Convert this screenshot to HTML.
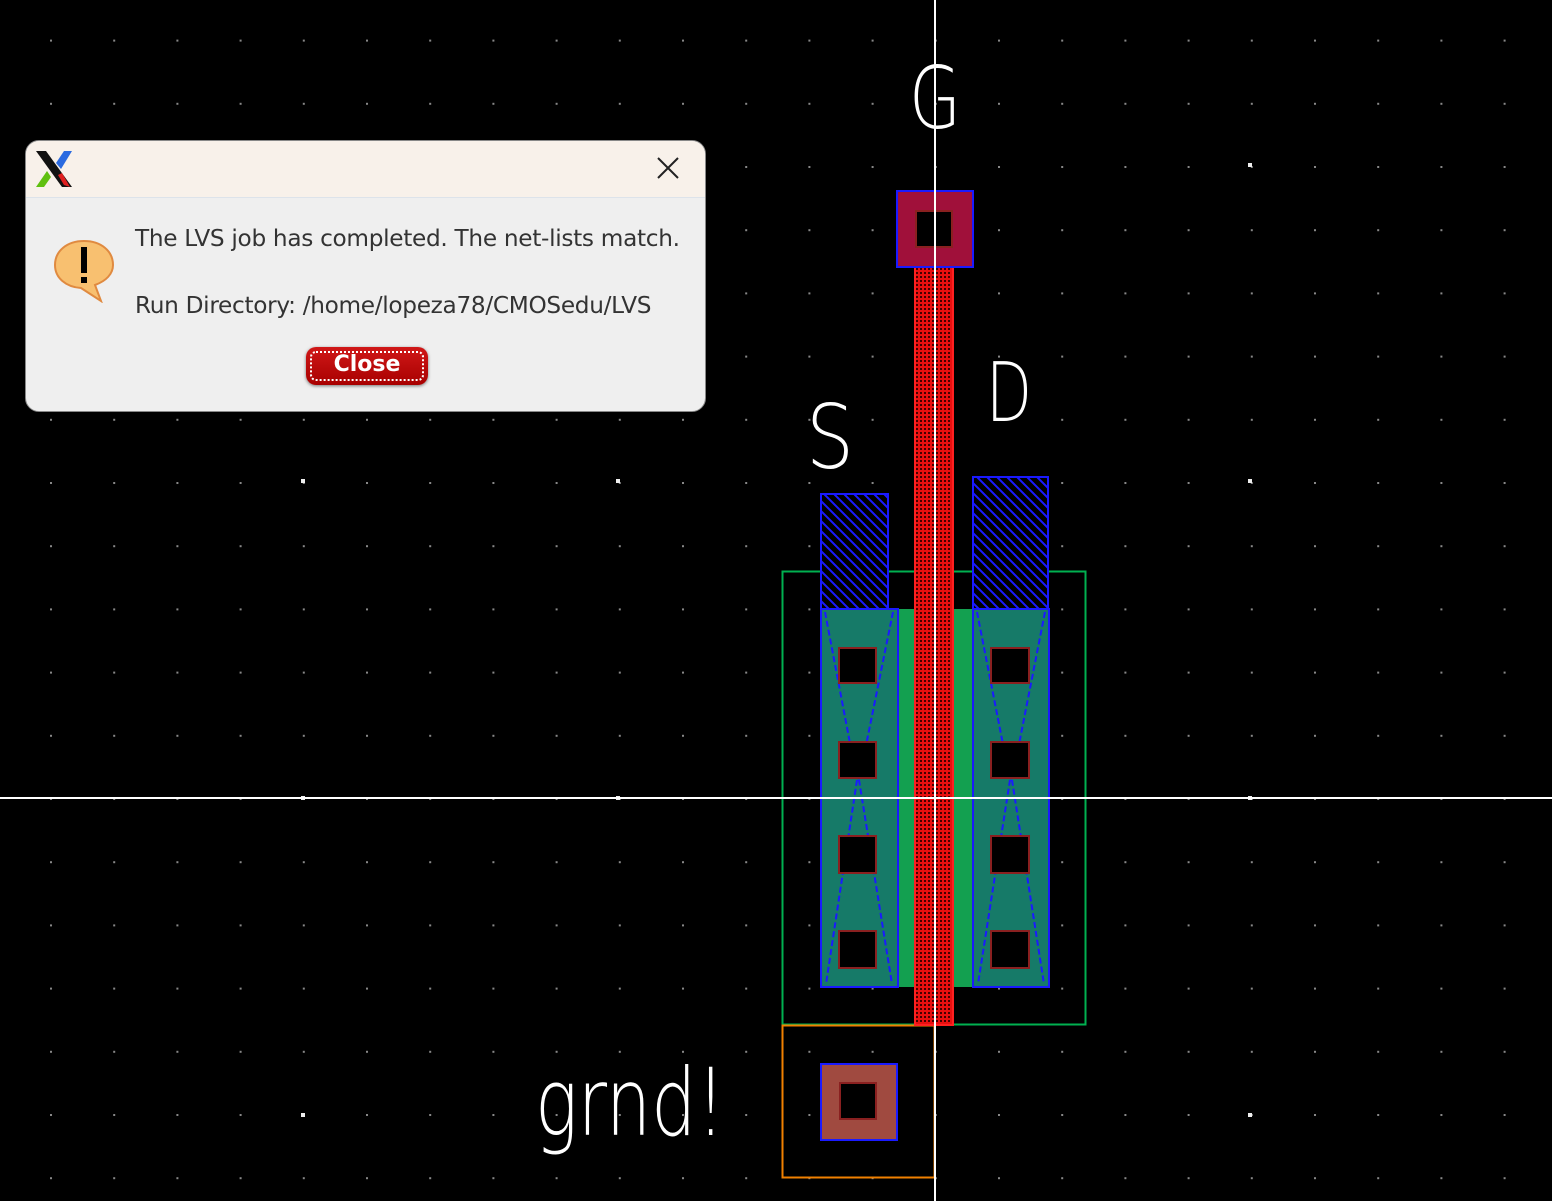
<!DOCTYPE html>
<html><head><meta charset="utf-8"><style>
html,body{margin:0;padding:0;background:#000;width:1552px;height:1201px;overflow:hidden}
svg{position:absolute;left:0;top:0}
.dlg{position:absolute;left:25px;top:140px;width:679px;height:270px;border:1px solid #888;border-radius:14px;background:#efefef;overflow:hidden;font-family:"DejaVu Sans","Liberation Sans",sans-serif}
.tb{height:56px;background:#f8f1ea;border-bottom:1px solid #dde3ea;position:relative}
.msg{position:absolute;left:109px;font-size:23.2px;color:#333;letter-spacing:-0.3px;white-space:nowrap}
.btn{position:absolute;left:280px;top:206px;width:122px;height:38px;border-radius:10px;background:linear-gradient(#d01818,#a80000);box-shadow:0 1px 3px rgba(0,0,0,.5)}
.btn i{position:absolute;left:4px;top:4px;right:4px;bottom:4px;border:2px dotted #fff;border-radius:6px}
.btn span{position:absolute;left:0;right:0;top:5px;text-align:center;color:#fff;font-weight:bold;font-size:22px}
</style></head><body>
<svg width="1552" height="1201" viewBox="0 0 1552 1201">
<defs>
<pattern id="g" x="50" y="39.6" width="63.2" height="63.2" patternUnits="userSpaceOnUse"><rect x="0" y="0" width="2" height="2" fill="#888"/></pattern>
<pattern id="bh" width="10" height="10" patternUnits="userSpaceOnUse"><path d="M-2 8L2 12M0 0L10 10M8 -2L12 2" stroke="#1a1aff" stroke-width="2"/></pattern>
<pattern id="rp" width="4" height="4" patternUnits="userSpaceOnUse"><rect width="4" height="4" fill="#e81010"/><rect width="2" height="2" fill="#400"/></pattern>
</defs>
<rect width="1552" height="1201" fill="#000"/>
<rect width="1552" height="1201" fill="url(#g)"/>
<g fill="#eee">
<rect x="301" y="479" width="4" height="4"/><rect x="616" y="479" width="4" height="4"/><rect x="1248" y="479" width="4" height="4"/>
<rect x="1248" y="163" width="4" height="4"/><rect x="301" y="1113" width="4" height="4"/><rect x="1248" y="1113" width="4" height="4"/>
<rect x="301" y="796" width="4" height="4"/><rect x="616" y="796" width="4" height="4"/><rect x="1248" y="796" width="4" height="4"/>
</g>
<rect x="782.5" y="571.5" width="303" height="453" fill="none" stroke="#00b050" stroke-width="2"/>
<rect x="782.5" y="1025.5" width="152" height="152" fill="none" stroke="#f08000" stroke-width="2"/>
<rect x="821" y="609" width="77" height="378" fill="#167a68"/>
<rect x="973" y="609" width="76" height="378" fill="#167a68"/>
<rect x="898" y="609" width="75" height="378" fill="#13a050"/>
<rect x="821" y="609" width="77" height="378" fill="none" stroke="#1a1aff" stroke-width="2"/>
<rect x="973" y="609" width="76" height="378" fill="none" stroke="#1a1aff" stroke-width="2"/>
<path d="M825 612L857 780L826 984M893 612L859 780L892 984M977 612L1010 780L978 984M1045 612L1012 780L1044 984" stroke="#1a1aff" stroke-width="2" stroke-dasharray="6 3" fill="none"/>
<rect x="821" y="494" width="67" height="115" fill="#000"/><rect x="821" y="494" width="67" height="115" fill="url(#bh)" stroke="#1a1aff" stroke-width="2"/>
<rect x="973" y="477" width="75" height="132" fill="#000"/><rect x="973" y="477" width="75" height="132" fill="url(#bh)" stroke="#1a1aff" stroke-width="2"/>
<g fill="#000" stroke="#8a2020" stroke-width="2">
<rect x="839" y="648" width="37" height="35"/><rect x="839" y="742" width="37" height="36"/><rect x="839" y="836" width="37" height="37"/><rect x="839" y="931" width="37" height="37"/>
<rect x="991" y="648" width="38" height="35"/><rect x="991" y="742" width="38" height="36"/><rect x="991" y="836" width="38" height="37"/><rect x="991" y="931" width="38" height="37"/>
</g>
<rect x="915" y="264" width="38" height="761" fill="url(#rp)" stroke="#ff2020" stroke-width="2"/>
<rect x="897" y="191" width="76" height="76" fill="#a0103a" stroke="#1a1aff" stroke-width="2"/>
<rect x="916" y="211" width="36" height="36" fill="#000" stroke="#8a2020" stroke-width="2"/>
<rect x="821" y="1064" width="76" height="76" fill="#a04a40" stroke="#1a1aff" stroke-width="2"/>
<rect x="840" y="1083" width="36" height="36" fill="#000" stroke="#8a2020" stroke-width="2"/>
<rect x="934" y="0" width="2" height="1201" fill="#fff"/>
<rect x="0" y="797" width="1552" height="2" fill="#fff"/>
<g fill="#fff" font-family="DejaVu Sans, sans-serif" font-weight="200">
<text x="909" y="128" font-size="86" textLength="52" lengthAdjust="spacingAndGlyphs">G</text>
<text x="986" y="421" font-size="82" textLength="46" lengthAdjust="spacingAndGlyphs">D</text>
<text x="806" y="468" font-size="88" textLength="48" lengthAdjust="spacingAndGlyphs">S</text>
<text x="535" y="1135" font-size="94" textLength="190" lengthAdjust="spacingAndGlyphs">grnd!</text>
</g>
</svg>
<div class="dlg">
<div class="tb">
<svg width="40" height="40" style="left:8px;top:8px" viewBox="0 0 40 40"><path d="M2 2L12 2L38 38L28 38Z" fill="#111"/><path d="M38 2L30 2L22 14L27 20Z" fill="#2a6ae0"/><path d="M2 38L10 38L17 28L13 22Z" fill="#60c010"/><path d="M24 26L30 36L36 38L28 24Z" fill="#e02020"/></svg>
<svg width="24" height="24" style="left:630px;top:15px" viewBox="0 0 24 24"><path d="M2 2L22 22M22 2L2 22" stroke="#222" stroke-width="2"/></svg>
</div>
<svg width="66" height="66" style="left:25px;top:96px" viewBox="0 0 66 66"><path d="M33 4C16 4 4 14 4 28C4 41 15 50 30 51L50 64L44 48C55 44 62 37 62 28C62 14 50 4 33 4Z" fill="#f8c070" stroke="#e08a40" stroke-width="2"/><rect x="30" y="10" width="6" height="26" fill="#000"/><rect x="30" y="40" width="6" height="6" fill="#000"/></svg>
<div class="msg" style="top:84px">The LVS job has completed. The net-lists match.</div>
<div class="msg" style="top:151px">Run Directory: /home/lopeza78/CMOSedu/LVS</div>
<div class="btn"><i></i><span>Close</span></div>
</div>
</body></html>
